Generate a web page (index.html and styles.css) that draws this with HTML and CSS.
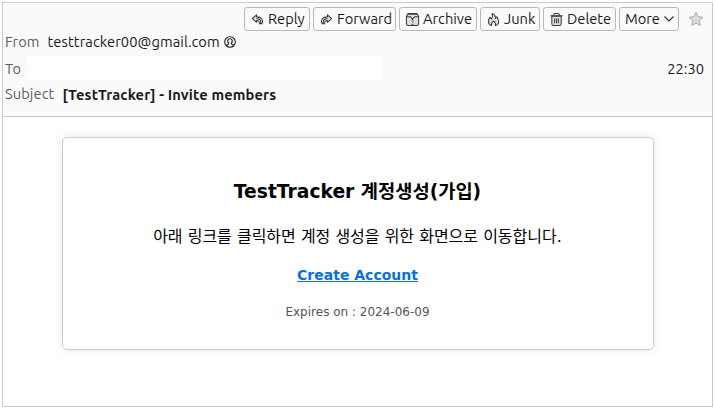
FILE: index.html
```html
<!DOCTYPE html>
<html lang="ko">
<head>
<meta charset="utf-8">
<title>[TestTracker] - Invite members</title>
<link rel="stylesheet" href="styles.css">
</head>
<body>
<main class="message">
  <header class="header">
    <div class="toolbar">
      <button class="btn reply"><svg class="icon" viewBox="0 0 16 16"><path d="M7 3 2.500 7 7 11V9c2-.2 3 .6 3 3.500h2.800C14.500 8 12 5.200 7 5.200zM7 7.200c3.500-.2 4.700 1.800 4.400 5"/></svg><span>Reply</span></button>
      <button class="btn forward"><svg class="icon" viewBox="0 0 16 16"><path d="M9 3l4.500 4L9 11V9c-2-.2-3 .6-3 3.500H3.200C1.500 8 4 5.200 9 5.200zM9 7.200c-3.500-.2-4.700 1.800-4.400 5"/></svg><span>Forward</span></button>
      <button class="btn archive"><svg class="icon" viewBox="0 0 16 16"><path d="M3.500 1.500h9l2 3v8a2 2 0 0 1-2 2h-9a2 2 0 0 1-2-2v-8z"/><path class="line" d="M1.500 5h4l2.500 2.500L10.500 5h4M3.500 2.500h9M8 7.500v1M7 9.500h2M8 11.500h1M7 13.500h2"/></svg><span>Archive</span></button>
      <button class="btn junk"><svg class="icon" viewBox="0 0 16 16"><path d="M6 14.500C3.500 13.500 2.500 11.800 2.500 9.800c0-2 1.200-3 1.600-4.300l1.400 2C7.500 5.800 7 3.500 6.500 1.500c3 1.200 3.800 3.300 3.700 5.500l1.300-2c1.200 2 2 3.200 2 5 0 2.200-1.300 3.900-3.500 4.500.6-2-.4-3.500-2-4.700-1.600 1.200-2.600 2.700-2 4.700z"/></svg><span>Junk</span></button>
      <button class="btn delete"><svg class="icon" viewBox="0 0 16 16"><path d="M3 4.500h10v8a2 2 0 0 1-2 2H5a2 2 0 0 1-2-2z"/><path class="line" d="M1.500 4h13M5 4V3q0-1.500 1.500-1.500h3Q11 1.500 11 3v1M6 7v5M8 7v5M10 7v5"/></svg><span>Delete</span></button>
      <button class="btn more"><span>More</span><svg class="chevron" viewBox="0 0 12 12"><path d="m1.500 3.500 4.500 4.500 4.500-4.500"/></svg></button>
      <svg class="star" viewBox="0 0 16 16"><path d="m8 1.300 2 4.500 4.900.5-3.700 3.300 1.100 4.900L8 12l-4.300 2.500 1.100-4.900-3.700-3.300 4.900-.5z"/></svg>
    </div>
    <div class="row from"><span class="label">From</span><span class="address">testtracker00@gmail.com</span><svg class="contact" viewBox="0 0 12 12"><circle cx="6" cy="6" r="5.300"/><path d="M2.800 10v-.8q0-1 1.800-1.200V7Q3.500 6 3.800 4.500 4.200 2.800 6 2.800T8.200 4.500Q8.500 6 7.400 7v1q1.800.2 1.800 1.200v.8"/></svg></div>
    <div class="row to"><span class="label">To</span><span class="recipient"></span><time class="time">22:30</time></div>
    <div class="row subject"><span class="label">Subject</span><strong class="title">[TestTracker] - Invite members</strong></div>
  </header>
  <section class="card">
    <h1>TestTracker 계정생성(가입)</h1>
    <p class="intro">아래 링크를 클릭하면 계정 생성을 위한 화면으로 이동합니다.</p>
    <a class="create" href="#">Create Account</a>
    <p class="expires">Expires on : 2024-06-09</p>
  </section>
</main>
</body>
</html>
```
FILE: styles.css
```css
* { box-sizing: border-box; }
body { margin: 0; padding: 2px; background: #fff; overflow: hidden; }
.message { width: 711px; height: 405px; border: 1px solid #ccc; background: #fff; }
.header {
  height: 114px;
  padding: 4px 8px 0 2px;
  background: #fafafa;
  border-bottom: 1px solid #ccc;
  color: #1a1a1a;
  font: 14.667px/20px "Ubuntu", "Noto Sans", sans-serif;
}
.toolbar { display: flex; justify-content: flex-end; gap: 3px; height: 24px; }
.btn {
  display: flex;
  align-items: center;
  height: 24px;
  padding: 0 0 0 5px;
  border: 1px solid #b8b8b8;
  border-radius: 3px;
  background: #fafafa;
  color: inherit;
  font: inherit;
  white-space: nowrap;
}
.icon { flex: none; width: 15px; height: 15px; margin-right: 3px; fill: #dedede; stroke: #3a3a3a; stroke-width: 1.1; stroke-linejoin: round; }
.icon .line { fill: none; }
.reply { width: 66px; }
.forward { width: 83px; }
.archive { width: 78px; }
.junk { width: 60px; }
.delete { width: 73px; }
.more { width: 60px; }
.chevron { flex: none; width: 12px; height: 12px; margin-left: 3px; fill: none; stroke: #333; stroke-width: 1.2; }
.star { width: 16px; height: 16px; margin: 4px 0 0 6px; fill: #dedede; stroke: #aaa; }
.row { display: flex; align-items: center; }
.label { color: #5e5e5e; letter-spacing: .08px; }
.from { height: 22px; }
.address { margin-left: 8px; letter-spacing: .08px; }
.contact { width: 12px; height: 12px; margin-left: 4px; fill: none; stroke: #222; stroke-width: 1.1; }
.to { height: 30px; padding-top: 1px; }
.recipient { width: 356px; height: 24px; margin: -1px 0 0 6px; background: #fff; }
.time { margin-left: auto; }
.subject { height: 22px; }
.title { margin-left: 8px; padding-top: 1px; letter-spacing: .14px; }
.card {
  display: flex;
  flex-direction: column;
  align-items: center;
  width: 592px;
  height: 213px;
  margin: 20px 0 0 59px;
  padding: 40px 1px 0 0;
  border: 1px solid #ccc;
  border-radius: 5px;
  box-shadow: 0 0 10px rgba(0, 0, 0, .1);
  font-family: "DejaVu Sans", "Noto Sans CJK KR", sans-serif;
  color: #000;
  white-space: nowrap;
}
.card h1 { margin: 0; font-size: 18.72px; line-height: 27px; }
.card .intro { margin: 20px 0 0; font-size: 16px; line-height: 24px; }
.create { margin-top: 17px; color: #0b6fde; font-size: 14px; line-height: 18px; font-weight: bold; }
.expires { margin: 20px 0 0; color: #555; font-size: 12px; line-height: 16px; }
```
